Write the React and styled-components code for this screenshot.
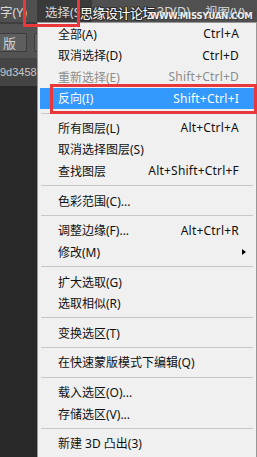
import React from "react";
import styled, { createGlobalStyle } from "styled-components";

const GlobalStyle = createGlobalStyle`
  html, body {
    margin: 0;
    padding: 0;
    background: #282828;
    overflow: hidden;
  }
`;

const groups = [
  [
    { label: "全部(A)", key: "Ctrl+A" },
    { label: "取消选择(D)", key: "Ctrl+D" },
    { label: "重新选择(E)", key: "Shift+Ctrl+D", disabled: true },
    { label: "反向(I)", key: "Shift+Ctrl+I", active: true },
  ],
  [
    { label: "所有图层(L)", key: "Alt+Ctrl+A" },
    { label: "取消选择图层(S)" },
    { label: "查找图层", key: "Alt+Shift+Ctrl+F" },
  ],
  [{ label: "色彩范围(C)..." }],
  [
    { label: "调整边缘(F)...", key: "Alt+Ctrl+R" },
    { label: "修改(M)", sub: true },
  ],
  [{ label: "扩大选取(G)" }, { label: "选取相似(R)" }],
  [{ label: "变换选区(T)" }],
  [{ label: "在快速蒙版模式下编辑(Q)" }],
  [{ label: "载入选区(O)..." }, { label: "存储选区(V)..." }],
  [{ label: "新建 3D 凸出(3)" }],
];

const App = () => {
  return (
    <Page>
      <GlobalStyle />
      <TopBar>
        <MenuTitle $width={37}>字(Y)</MenuTitle>
        <MenuTitle $width={55} $active $pad={8}>选择(S)</MenuTitle>
        <MenuTitle $width={48} $pad={65}>3D(D)</MenuTitle>
        <MenuTitle $width={52}>视图(V)</MenuTitle>
        <Watermark>思缘设计论坛</Watermark>
        <WatermarkUrl>WWW.MISSYUAN.COM</WatermarkUrl>
        <TitleMark />
      </TopBar>
      <Body>
        <LeftPanel>
          <Toolbar>
            <ToolButton $width={23}>版</ToolButton>
            <ToolButton $width={20} />
          </Toolbar>
          <TabRow>9d3458</TabRow>
          <Dark />
        </LeftPanel>
        <Menu>
          {groups.map((group, gi) => (
            <React.Fragment key={gi}>
              {gi > 0 && <Separator />}
              {group.map((item) => (
                <Item key={item.label} $active={item.active} $disabled={item.disabled}>
                  <span>{item.label}</span>
                  {item.key && <Shortcut>{item.key}</Shortcut>}
                  {item.sub && <Arrow />}
                  {item.active && <ItemMark />}
                </Item>
              ))}
            </React.Fragment>
          ))}
        </Menu>
      </Body>
    </Page>
  );
};

export default App;

const Page = styled.div`
  width: 257px;
  height: 457px;
  position: relative;
  overflow: hidden;
  display: flex;
  flex-direction: column;
  font-family: "Noto Sans", "Noto Sans CJK SC", sans-serif;
`;

const TopBar = styled.div`
  position: relative;
  height: 22px;
  flex: none;
  display: flex;
  align-items: stretch;
  background: #505050;
  color: #d8d8d8;
  font-size: 12.5px;
`;

const MenuTitle = styled.div`
  flex: none;
  width: ${(p) => p.$width}px;
  margin-left: ${(p) => (p.$pad && !p.$active ? p.$pad : 0)}px;
  padding-left: ${(p) => (p.$active ? p.$pad : 0)}px;
  box-sizing: border-box;
  display: flex;
  align-items: center;
  white-space: nowrap;
  background: ${(p) => (p.$active ? "#3a3a3a" : "transparent")};
`;

const Watermark = styled.div`
  position: absolute;
  left: 80px;
  top: 3px;
  font-size: 13px;
  color: #ffffff;
  letter-spacing: -0.5px;
  text-shadow: 1px 1px 0 #2a2a2a, -1px -1px 0 #2a2a2a, 1px -1px 0 #2a2a2a, -1px 1px 0 #2a2a2a;
`;

const WatermarkUrl = styled.div`
  position: absolute;
  left: 150px;
  top: 11px;
  font-family: "DejaVu Sans", sans-serif;
  font-size: 8.5px;
  font-weight: 700;
  color: #eeeeee;
  letter-spacing: -0.2px;
  text-shadow: 1px 1px 0 #3a3a3a;
`;

const TitleMark = styled.div`
  position: absolute;
  left: 23px;
  top: -3px;
  width: 57px;
  height: 30px;
  box-sizing: border-box;
  border: 3px solid #e8383b;
  z-index: 3;
`;

const Body = styled.div`
  flex: 1;
  display: flex;
  min-height: 0;
`;

const LeftPanel = styled.div`
  width: 37px;
  flex: none;
  display: flex;
  flex-direction: column;
  overflow: hidden;
`;

const Toolbar = styled.div`
  height: 36px;
  flex: none;
  background: #535353;
  border-top: 2px solid #3e3e3e;
  box-sizing: border-box;
  display: flex;
  align-items: center;
  gap: 7px;
  padding-top: 2px;
  margin-left: -2px;
`;

const ToolButton = styled.div`
  flex: none;
  width: ${(p) => p.$width}px;
  height: 17px;
  background: #5e5e5e;
  border: 1px solid #3c3c3c;
  border-radius: 2px;
  color: #cfcfcf;
  font-size: 13px;
  display: flex;
  align-items: center;
  padding-left: 4px;
`;

const TabRow = styled.div`
  height: 28px;
  flex: none;
  background: #444444;
  color: #c8c8c8;
  font-size: 11px;
  display: flex;
  align-items: center;
  white-space: nowrap;
  font-family: "Liberation Sans", sans-serif;
`;

const Dark = styled.div`
  flex: 1;
  background: #282828;
`;

const Menu = styled.div`
  flex: 1;
  background: #f0f0f0;
  border: 1px solid #979797;
  border-bottom: none;
  padding: 0 2px;
  display: flex;
  flex-direction: column;
  font-size: 12px;
`;

const Item = styled.div`
  position: relative;
  height: 21.5px;
  flex: none;
  display: flex;
  align-items: center;
  justify-content: space-between;
  padding: 0 15px 0 18px;
  white-space: nowrap;
  color: ${(p) => (p.$active ? "#ffffff" : p.$disabled ? "#8d8d8d" : "#111111")};
  background: ${(p) => (p.$active ? "#3399ff" : "transparent")};
`;

const Shortcut = styled.span`
  letter-spacing: 0.2px;
`;

const Arrow = styled.span`
  width: 0;
  height: 0;
  margin-right: -7px;
  border-top: 3.5px solid transparent;
  border-bottom: 3.5px solid transparent;
  border-left: 4px solid #000;
`;

const ItemMark = styled.span`
  position: absolute;
  left: 10px;
  right: -3px;
  top: -4px;
  bottom: -5px;
  border: 3px solid #e8383b;
`;

const Separator = styled.div`
  flex: none;
  height: 1px;
  margin: 3.6px 1px;
  background: #c6c6c6;
`;
